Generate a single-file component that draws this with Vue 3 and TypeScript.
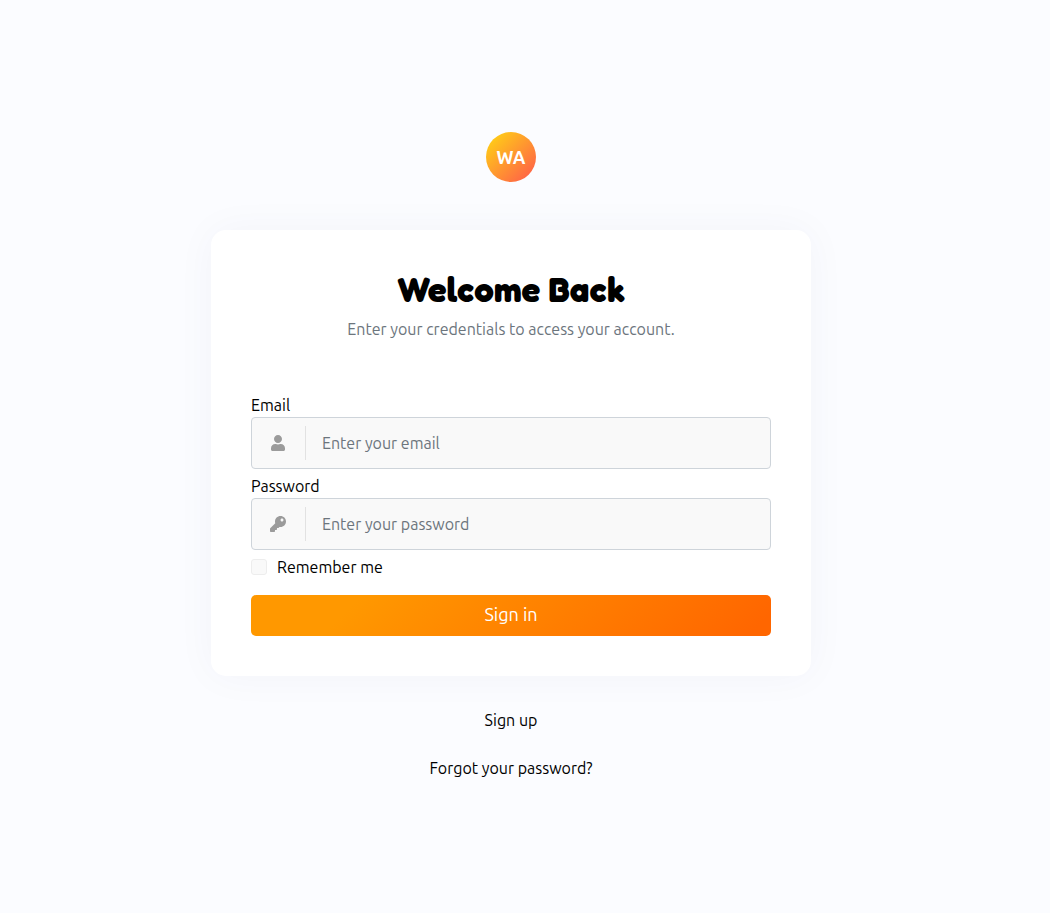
<script setup lang="ts">
import { ref } from 'vue'

const email = ref<string>('')
const password = ref<string>('')
const remember = ref<boolean>(false)
</script>

<template>
  <main class="page">
    <div class="column">
      <div class="logo">WA</div>
      <section class="card">
        <header class="intro">
          <h1>Welcome Back</h1>
          <p>Enter your credentials to access your account.</p>
        </header>
        <form @submit.prevent>
          <label class="label" for="email">Email</label>
          <div class="field">
            <span class="icon">
              <svg viewBox="0 0 448 512" width="14" height="16" aria-hidden="true">
                <path d="M224 256c70.7 0 128-57.3 128-128S294.7 0 224 0 96 57.3 96 128s57.3 128 128 128zm89.6 32h-16.7c-22.2 10.2-46.9 16-72.9 16s-50.6-5.8-72.9-16h-16.7C60.2 288 0 348.2 0 422.4V464c0 26.5 21.5 48 48 48h352c26.5 0 48-21.5 48-48v-41.6c0-74.2-60.2-134.4-134.4-134.4z" />
              </svg>
            </span>
            <input id="email" v-model="email" type="email" placeholder="Enter your email" />
          </div>
          <label class="label" for="password">Password</label>
          <div class="field">
            <span class="icon">
              <svg viewBox="0 0 512 512" width="16" height="16" aria-hidden="true">
                <path d="M512 176.001C512 273.203 433.202 352 336 352c-11.22 0-22.19-1.062-32.827-3.069l-24.012 27.014A23.999 23.999 0 0 1 261.223 384H224v40c0 13.255-10.745 24-24 24h-40v40c0 13.255-10.745 24-24 24H24c-13.255 0-24-10.745-24-24v-78.059c0-6.365 2.529-12.47 7.029-16.971l161.802-161.802C163.108 213.814 160 195.271 160 176 160 78.798 238.797.001 335.999 0 433.488-.001 512 78.511 512 176.001zM336 128c0 26.51 21.49 48 48 48s48-21.49 48-48-21.49-48-48-48-48 21.49-48 48z" />
              </svg>
            </span>
            <input id="password" v-model="password" type="password" placeholder="Enter your password" />
          </div>
          <div class="remember">
            <input id="remember" v-model="remember" type="checkbox" />
            <label for="remember">Remember me</label>
          </div>
          <button class="submit" type="submit">Sign in</button>
        </form>
      </section>
      <nav class="links">
        <a href="#signup">Sign up</a>
        <a href="#forgot">Forgot your password?</a>
      </nav>
    </div>
  </main>
</template>

<style>
body {
  margin: 0;
  background: #fbfcff;
}
</style>

<style scoped>
.page {
  box-sizing: border-box;
  min-height: 100vh;
  padding: 24px 28px 26px 0;
  display: flex;
  align-items: center;
  justify-content: center;
  font: 16px/24px Ubuntu, "Open Sans", sans-serif;
  color: #000;
}

.column {
  width: 100%;
  max-width: 600px;
}

.logo {
  width: 50px;
  height: 50px;
  margin: 0 auto 48px;
  border-radius: 50%;
  background: linear-gradient(135deg, #ffd414 5%, #ff6347 90%);
  color: #fff;
  font-size: 18px;
  font-weight: 700;
  line-height: 50px;
  text-align: center;
}

.card {
  padding: 40px;
  border-radius: 15px;
  background: #fff;
  box-shadow: 0 0 40px rgba(51, 51, 102, 0.04);
}

.intro {
  margin-bottom: 52px;
  text-align: center;
}

h1 {
  margin: 0 0 9px;
  font: 700 35px/38px Fredoka, Lato, sans-serif;
}

.intro p {
  margin: 0;
  color: #6c757d;
}

.label {
  display: block;
}

.field {
  box-sizing: border-box;
  display: flex;
  align-items: center;
  height: 52px;
  margin-bottom: 5px;
  border: 1px solid #ced4da;
  border-radius: 4px;
  background: #f9f9f9;
}

.field:focus-within {
  border-color: #ff9800;
}

.icon {
  box-sizing: border-box;
  flex: none;
  display: flex;
  align-items: center;
  justify-content: center;
  width: 54px;
  height: 34px;
  padding-right: 1px;
  border-right: 1px solid #e2e2e2;
}

.icon svg {
  fill: #9b9b9b;
}

.field input {
  flex: 1;
  min-width: 0;
  height: 100%;
  box-sizing: border-box;
  padding: 0 16px;
  border: 0;
  outline: 0;
  background: transparent;
  color: #212529;
  font: inherit;
}

.field input::placeholder {
  color: #6c757d;
  opacity: 1;
}

.remember {
  display: flex;
  align-items: center;
  gap: 10px;
  margin-bottom: 16px;
}

.remember input {
  appearance: none;
  box-sizing: border-box;
  width: 16px;
  height: 16px;
  margin: 0;
  border: 1px solid #ededed;
  border-radius: 3px;
  background: #f9f9f9;
}

.remember input:checked {
  background: #ff9800;
}

.submit {
  display: block;
  width: 100%;
  height: 41px;
  padding: 0 0 2px;
  border: 0;
  border-radius: 5px;
  background: linear-gradient(135deg, #ff9800 20%, #ff6600 96%);
  color: #fff;
  font: inherit;
  font-size: 18px;
  cursor: pointer;
}

.links {
  display: flex;
  flex-direction: column;
  align-items: center;
  gap: 24px;
  margin-top: 32px;
}

.links a {
  color: #000;
  text-decoration: none;
}
</style>
